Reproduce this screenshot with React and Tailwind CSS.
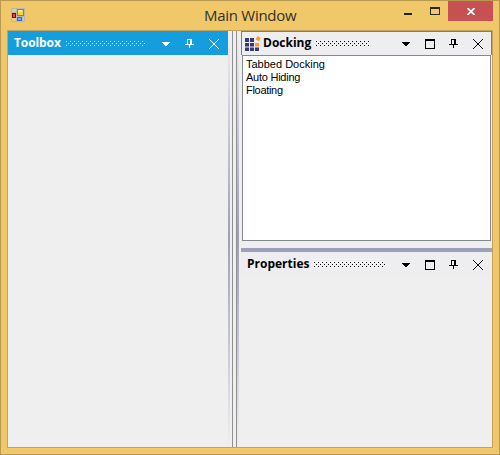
import React from "react";

function Dots({ color, id, width }) {
  return (
    <svg width={width} height="5" className="shrink-0" shapeRendering="crispEdges">
      <defs>
        <pattern id={id} width="4" height="4" patternUnits="userSpaceOnUse">
          <rect width="1" height="1" fill={color} />
          <rect x="2" y="2" width="1" height="1" fill={color} />
        </pattern>
      </defs>
      <rect width={width} height="5" fill={`url(#${id})`} />
    </svg>
  );
}

function Chevron() {
  return (
    <svg width="8" height="4" fill="currentColor" shapeRendering="crispEdges">
      <path d="M0 0h8v1H0zM1 1h6v1H1zM2 2h4v1H2zM3 3h2v1H3z" />
    </svg>
  );
}

function Maximize() {
  return (
    <svg width="10" height="10" fill="currentColor" shapeRendering="crispEdges">
      <path fillRule="evenodd" d="M0 0h10v10H0zM1 2v7h8V2z" />
    </svg>
  );
}

function Pin() {
  return (
    <svg width="9" height="9" fill="currentColor" shapeRendering="crispEdges">
      <path d="M2 0h5v1H2zM2 1h1v4H2zM5 1h2v4H5zM0 5h9v1H0zM4 6h1v3H4z" />
    </svg>
  );
}

function Close() {
  return (
    <svg width="10" height="10" stroke="currentColor" fill="none" shapeRendering="crispEdges">
      <path d="M0 0L10 10M10 0L0 10" />
    </svg>
  );
}

function GridLogo() {
  return (
    <svg width="16" height="16">
      <path
        d="M0 2h4v4H0zM5 2h4v4H5zM0 7h4v3.500H0zM5 7h4v3.500H5zM0 11.500h4V15H0zM5 11.500h4V15H5zM10 11.500h4V15h-4z"
        fill="#35377c"
      />
      <path d="M10 7h4v3.500h-4zM12.500 0L15.700 2 14 5.200l-3.400-1.700z" fill="#ff9933" />
    </svg>
  );
}

function FormIcon() {
  return (
    <svg width="14" height="14" shapeRendering="crispEdges">
      <path d="M0 0h14v14H0z" fill="#b9b9b4" />
      <path d="M1 1h4v3H1zM1 10h4v3H1zM12 9h1v4h-1z" fill="#e8cc83" />
      <path d="M6 1h7v7H6z" fill="#b57c00" />
      <path d="M7 2h5v5H7z" fill="#ffd23c" />
      <path d="M7 2h4v2H7z" fill="#ffe889" />
      <path d="M1 5h4v5H1z" fill="#8c0808" />
      <path d="M2 6h2v3H2z" fill="#dc4a3c" />
      <path d="M6 9h5v4H6z" fill="#346bc8" />
      <path d="M7 10h3v2H7z" fill="#77a7f5" />
    </svg>
  );
}

function Rail() {
  return <div className="w-[2px] bg-linear-to-b from-[#efefef] via-[#9d9eba] to-[#efefef]" />;
}

function Actions({ maximize }) {
  return (
    <div className="ml-auto flex items-start">
      <div className="pt-[3px]"><Chevron /></div>
      {maximize && <div className="ml-[15px]"><Maximize /></div>}
      <div className={maximize ? "ml-[14px]" : "ml-[15px]"}><Pin /></div>
      <div className="ml-[15px]"><Close /></div>
    </div>
  );
}

export default function App() {
  return (
    <div className="flex h-[455px] w-[500px] flex-col overflow-hidden border border-[#b99850] bg-[#f0c869] font-['Open_Sans',sans-serif] text-black">
      <div className="flex h-[29px] shrink-0">
        <div className="w-[203px] pt-[7px] pl-[10px]"><FormIcon /></div>
        <div className="w-[187px] pt-[4px] text-[15px] leading-[20px] tracking-[-0.28px] whitespace-nowrap text-[#33302a]">Main Window</div>
        <div className="flex w-[57px] pt-[6px] pl-[13px]">
          <div className="mt-[6px] h-[2px] w-[8px] bg-[#222]" />
          <div className="ml-[18px] h-[8px] w-[10px] border border-t-2 border-[#2b2820]" />
        </div>
        <div className="flex h-[20px] w-[45px] items-center justify-center bg-[#c75050]">
          <svg width="8" height="7" stroke="white" strokeWidth="1.700"><path d="M.5 0l7 7M7.500 0l-7 7" /></svg>
        </div>
      </div>

      <div className="mx-[6px] flex h-[418px] shrink-0 border border-[#c3a25c] bg-[#efefef]">
        <section className="w-[220px]">
          <header className="flex h-[24px] items-center bg-[#149edd] pt-px pr-[9px] pl-[6px] text-white">
            <h2 className="w-[52px] shrink-0 pb-[2px] text-[12px] leading-[16px] font-bold tracking-[-0.1px]">Toolbox</h2>
            <div className="pb-px"><Dots color="#ffffff" id="toolboxDots" width={79} /></div>
            <Actions />
          </header>
        </section>

        <div className="flex w-[13px]">
          <Rail />
          <div className="ml-[2px] w-px bg-[#8f8f8f]" />
          <div className="ml-[3px] w-px bg-[#8f8f8f]" />
          <Rail />
        </div>

        <div className="flex w-[251px] flex-col">
          <section className="flex h-[217px] flex-col">
            <header className="flex h-[24px] shrink-0 items-center border-x border-t border-[#149edd] bg-[#eeeef1] pr-[8px] pl-[3px]">
              <div className="w-[18px] shrink-0"><GridLogo /></div>
              <h2 className="w-[53px] shrink-0 pb-[2px] text-[12px] leading-[16px] font-bold">Docking</h2>
              <Dots color="#000000" id="dockingDots" width={53} />
              <Actions maximize />
            </header>
            <ul className="mr-px ml-px h-[186px] border border-[#828790] bg-white pt-[2px] pl-[3px] font-['Liberation_Sans',sans-serif] text-[11px] leading-[13px]">
              <li>Tabbed Docking</li>
              <li className="tracking-[-0.25px]">Auto Hiding</li>
              <li className="tracking-[-0.3px]">Floating</li>
            </ul>
          </section>
          <div className="h-[4px] bg-[#9e9fbb]" />
          <section>
            <header className="flex h-[25px] items-center bg-[#eeeef1] pr-[9px] pl-[6px]">
              <h2 className="w-[67px] shrink-0 pb-[1px] text-[12px] leading-[16px] font-bold">Properties</h2>
              <Dots color="#000000" id="propertiesDots" width={71} />
              <Actions maximize />
            </header>
          </section>
        </div>
      </div>
    </div>
  );
}
